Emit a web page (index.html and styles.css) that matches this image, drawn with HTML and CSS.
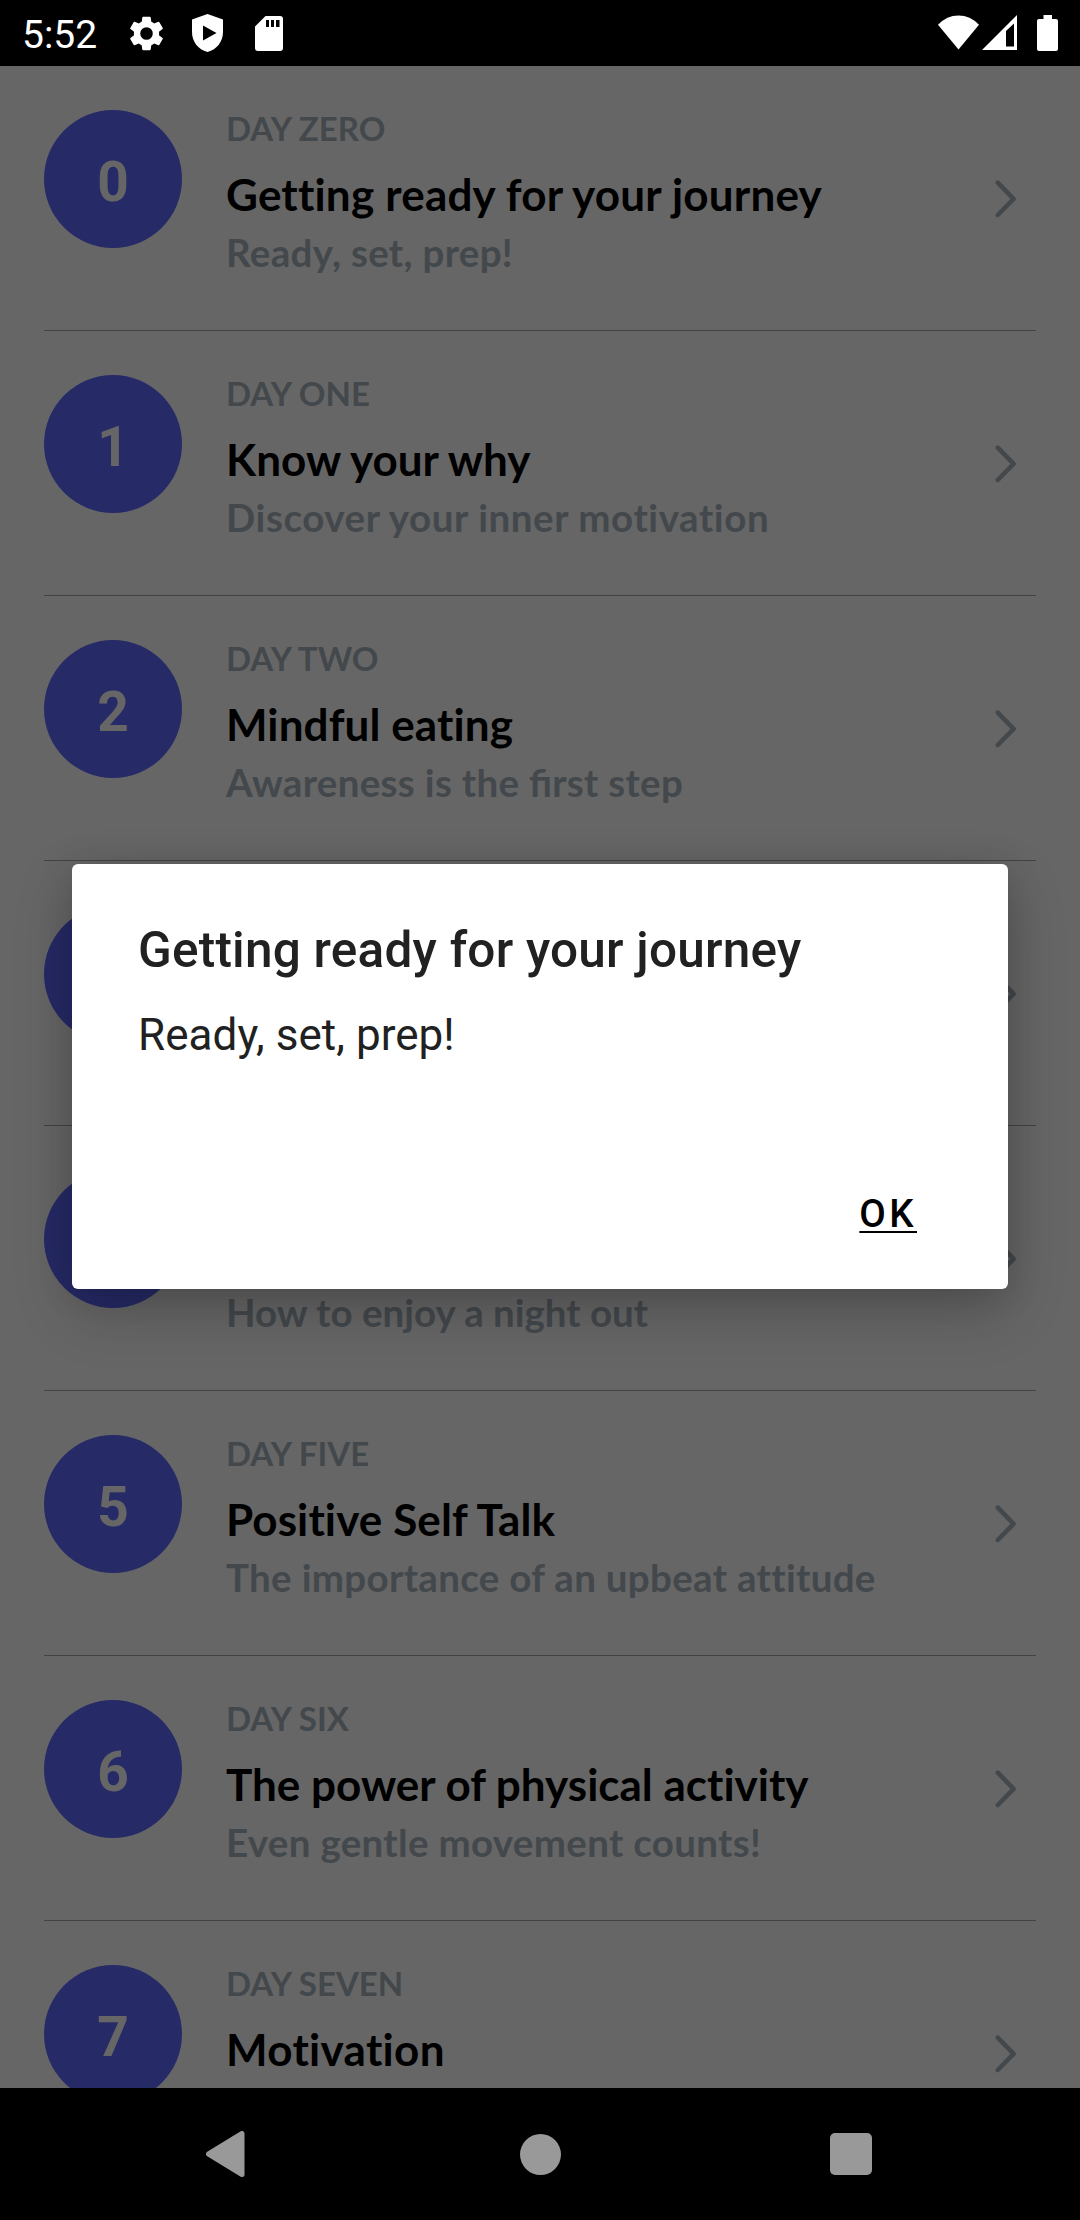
FILE: index.html
```html
<!DOCTYPE html>
<html lang="en">
<head>
<meta charset="utf-8">
<title>Getting ready for your journey</title>
<link rel="stylesheet" href="styles.css">
</head>
<body>
<div class="screen">
  <header class="status">
    <span class="clock">5:52</span>
    <svg class="gear" viewBox="2 2 20 20"><path fill-rule="evenodd" d="M19.14 12.94c.04-.3.06-.61.06-.94 0-.32-.02-.64-.07-.94l2.03-1.58a.49.49 0 0 0 .12-.61l-1.92-3.32a.49.49 0 0 0-.59-.22l-2.39.96c-.5-.38-1.03-.7-1.62-.94l-.36-2.54a.48.48 0 0 0-.48-.41h-3.84a.47.47 0 0 0-.47.41l-.36 2.54c-.59.24-1.13.57-1.62.94l-2.39-.96a.48.48 0 0 0-.59.22L2.74 8.87a.47.47 0 0 0 .12.61l2.03 1.58c-.05.3-.09.63-.09.94s.02.64.07.94l-2.03 1.58a.49.49 0 0 0-.12.61l1.92 3.32c.12.22.37.29.59.22l2.39-.96c.5.38 1.03.7 1.62.94l.36 2.54c.05.24.24.41.48.41h3.84c.24 0 .44-.17.47-.41l.36-2.54c.59-.24 1.13-.56 1.62-.94l2.39.96c.22.08.47 0 .59-.22l1.92-3.32a.47.47 0 0 0-.12-.61zM12 15.6A3.6 3.6 0 1 1 12 8.4a3.6 3.6 0 0 1 0 7.2z"/></svg>
    <svg class="shield" viewBox="0 0 31 38"><path fill-rule="evenodd" d="M15.500 0 31 5.500V18C31 27.500 25 35.500 15.500 38 6 35.500 0 27.500 0 18V5.500ZM11 11.500V26.500L24.500 19Z"/></svg>
    <svg class="sdcard" viewBox="0 0 28 35"><path fill-rule="evenodd" d="M10.500 0H25Q28 0 28 3V32Q28 35 25 35H3Q0 35 0 32V10.500ZM11 4V11H14V4ZM16 4V11H19V4ZM21 4V11H24.500V4Z"/></svg>
    <div class="signals">
      <svg class="wifi" viewBox="0 0 42 35"><path d="M21 35 0 9.500Q9 0 21 0T42 9.500Z"/></svg>
      <svg class="cell" viewBox="0 0 35 35"><path fill-rule="evenodd" d="M0 35 35 0V35ZM24 16V31.500H32V8.500Z"/></svg>
      <svg class="battery" viewBox="0 0 21 36"><path d="M6.500 0H15V4H19Q21 4 21 6V34Q21 36 19 36H2Q0 36 0 34V6Q0 4 2 4H6.500Z"/></svg>
    </div>
  </header>

  <main class="list">
    <article class="row"><div class="num">0</div><div class="copy"><p class="day">DAY ZERO</p><h2 class="name track-s">Getting ready for your journey</h2><p class="sub track-m">Ready, set, prep!</p></div><svg class="chevron" viewBox="0 0 22 40"><path d="M2.800 3.700 18.600 19.800 2.800 36"/></svg></article>
    <article class="row"><div class="num">1</div><div class="copy"><p class="day">DAY ONE</p><h2 class="name">Know your why</h2><p class="sub track-l">Discover your inner motivation</p></div><svg class="chevron" viewBox="0 0 22 40"><path d="M2.800 3.700 18.600 19.800 2.800 36"/></svg></article>
    <article class="row"><div class="num">2</div><div class="copy"><p class="day">DAY TWO</p><h2 class="name track-xs">Mindful eating</h2><p class="sub track-m">Awareness is the <span class="liga">fi</span>rst step</p></div><svg class="chevron" viewBox="0 0 22 40"><path d="M2.800 3.700 18.600 19.800 2.800 36"/></svg></article>
    <article class="row"><div class="num"></div><div class="copy"></div><svg class="chevron" viewBox="0 0 22 40"><path d="M2.800 3.700 18.600 19.800 2.800 36"/></svg></article>
    <article class="row"><div class="num"></div><div class="copy"><p class="day"></p><h2 class="name"></h2><p class="sub">How to enjoy a night out</p></div><svg class="chevron" viewBox="0 0 22 40"><path d="M2.800 3.700 18.600 19.800 2.800 36"/></svg></article>
    <article class="row"><div class="num">5</div><div class="copy"><p class="day">DAY FIVE</p><h2 class="name track-xs">Positive Self Talk</h2><p class="sub track-m">The importance of an upbeat attitude</p></div><svg class="chevron" viewBox="0 0 22 40"><path d="M2.800 3.700 18.600 19.800 2.800 36"/></svg></article>
    <article class="row"><div class="num">6</div><div class="copy"><p class="day">DAY SIX</p><h2 class="name">The power of physical activity</h2><p class="sub track-m">Even gentle movement counts!</p></div><svg class="chevron" viewBox="0 0 22 40"><path d="M2.800 3.700 18.600 19.800 2.800 36"/></svg></article>
    <article class="row"><div class="num">7</div><div class="copy"><p class="day">DAY SEVEN</p><h2 class="name track-m">Motivation</h2></div><svg class="chevron" viewBox="0 0 22 40"><path d="M2.800 3.700 18.600 19.800 2.800 36"/></svg></article>
  </main>

  <nav class="navbar">
    <svg class="back" viewBox="0 0 39 46"><path d="M36 2.500V43.500L2.500 23Z"/></svg>
    <span class="home"></span>
    <span class="recent"></span>
  </nav>

  <div class="scrim">
    <section class="dialog" role="dialog">
      <h1 class="dialog-title">Getting ready for your journey</h1>
      <p class="dialog-text">Ready, set, prep!</p>
      <div class="actions"><button class="ok">OK</button></div>
    </section>
  </div>
</div>
</body>
</html>
```
FILE: styles.css
```css
* { box-sizing: border-box; margin: 0; padding: 0; }
body { background: #000; }
.screen {
  position: relative;
  display: flex;
  flex-direction: column;
  width: 1080px;
  height: 2220px;
  overflow: hidden;
  background: #000;
}

/* Status bar */
.status {
  display: flex;
  align-items: flex-start;
  height: 66px;
  flex: none;
  padding: 0 22px 0 22px;
  color: #fff;
  font: 400 39px/66px Roboto, sans-serif;
}
.status svg { fill: #fff; flex: none; }
.clock { width: 107px; padding-top: 2px; }
.gear { width: 35px; height: 35px; margin-top: 16px; }
.shield { width: 31px; height: 38px; margin: 14px 0 0 28px; }
.sdcard { width: 28px; height: 35px; margin: 16px 0 0 32px; }
.signals { display: flex; margin-left: auto; }
.wifi { width: 41px; height: 35px; margin-top: 15px; }
.cell { width: 35px; height: 35px; margin: 15px 0 0 3px; }
.battery { width: 21px; height: 36px; margin: 15px 0 0 20px; }

/* Day list */
.list { flex: 1; min-height: 0; overflow: hidden; background: #fff; }
.row {
  display: flex;
  height: 265px;
  margin: 0 44px;
  padding-top: 44px;
  border-bottom: 1px solid #a4a8ac;
}
.num {
  flex: none;
  width: 138px;
  height: 138px;
  border-radius: 50%;
  background: #5f69ff;
  color: #fff;
  text-align: center;
  font: 700 55px/145px Roboto, sans-serif;
}
.copy {
  flex: 1;
  margin-top: -2px;
  padding-left: 44px;
  font-family: Lato, sans-serif;
  font-weight: 700;
  font-variant-ligatures: none;
}
.day { height: 41px; font-size: 33px; line-height: 40px; color: #a9b4be; }
.name { height: 65px; padding-top: 18px; font-size: 44px; line-height: 54px; color: #000; white-space: nowrap; }
.sub { padding-top: 15px; font-size: 38.5px; line-height: 46px; color: #a9b4be; white-space: nowrap; }
.track-xs { letter-spacing: .1px; }
.track-s { letter-spacing: .2px; }
.track-m { letter-spacing: .32px; }
.track-l { letter-spacing: .58px; }
.liga { font-variant-ligatures: normal; letter-spacing: 0; }
.chevron {
  flex: none;
  width: 22px;
  height: 40px;
  margin: 69px 19px 0 0;
  fill: none;
  stroke: #a9b4be;
  stroke-width: 4.6;
  stroke-linecap: round;
  stroke-linejoin: round;
}

/* Navigation bar */
.navbar {
  display: flex;
  align-items: center;
  justify-content: space-between;
  flex: none;
  height: 132px;
  padding: 0 208px 0 206px;
}
.back { width: 39px; height: 46px; fill: #999; stroke: #999; stroke-width: 5; stroke-linejoin: round; }
.home { width: 41px; height: 41px; margin-left: 5px; border-radius: 50%; background: #999; }
.recent { width: 42px; height: 42px; border-radius: 5px; background: #999; }

/* Dialog layer, covering only the list area */
.scrim {
  position: absolute;
  inset: 66px 0 132px;
  padding: 798px 72px 0;
  background: rgba(0, 0, 0, .6);
}
.dialog {
  display: flex;
  flex-direction: column;
  height: 425px;
  padding: 55px 66px 44px;
  border-radius: 6px;
  background: #fff;
  color: #212121;
  font-family: Roboto, sans-serif;
  box-shadow: 0 22px 60px rgba(0, 0, 0, .2), 0 4px 36px rgba(0, 0, 0, .12);
}
.dialog-title { font-size: 49.5px; line-height: 62px; font-weight: 500; letter-spacing: .23px; white-space: nowrap; }
.dialog-text { margin-top: 28px; font-size: 44px; line-height: 52px; letter-spacing: .05px; }
.actions { display: flex; justify-content: flex-end; margin: auto 25px 8px 0; }
.ok {
  border: 0;
  background: none;
  color: #000;
  font: 500 38.5px/46px Roboto, sans-serif;
  letter-spacing: 3.4px;
  text-decoration: underline;
  text-decoration-thickness: 2px;
  text-underline-offset: 4px;
  text-decoration-skip-ink: none;
}
```
